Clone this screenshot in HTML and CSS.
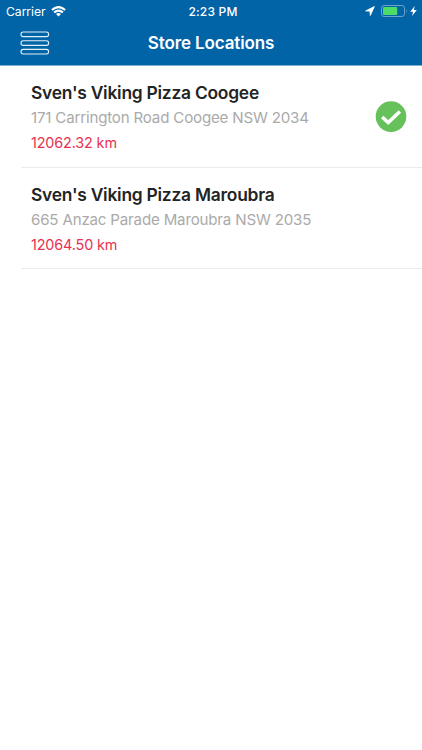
FILE: index.html
```html
<!DOCTYPE html>
<html lang="en">
<head>
<meta charset="utf-8">
<title>Store Locations</title>
<link rel="stylesheet" href="styles.css">
</head>
<body>
<header class="header">
  <div class="status">
    <div class="status-left">
      <span class="carrier">Carrier</span>
      <svg class="wifi" width="15" height="11" viewBox="0 0 15 11" fill="none" stroke="#fff" stroke-width="2.1"><path d="M.9 4.1Q7.5-2 14.1 4.1M3.1 6.6Q7.5 2.5 11.9 6.6"/><path d="M7.5 10.6 5 8Q7.5 6 10 8Z" fill="#fff" stroke="none"/></svg>
    </div>
    <span class="time">2:23 PM</span>
    <div class="status-right">
      <svg width="10" height="10" viewBox="0 0 10 10" fill="#fff" stroke="#fff" stroke-width=".9" stroke-linejoin="round"><path d="M9.3.6.7 4.9 5 5.1 5.3 9.4Z"/></svg>
      <svg class="battery" width="27" height="12" viewBox="0 0 27 12"><rect x=".5" y=".5" width="23" height="11" rx="2.6" fill="none" stroke="#6aa4cd"/><rect x="2" y="2" width="14.2" height="8" rx="1" fill="#4fdc66"/><path d="M25 4Q26.5 6 25 8Z" fill="#6aa4cd"/></svg>
      <svg class="bolt" width="7" height="10" viewBox="0 0 7 10" fill="#fff"><path d="M4.7 0 .2 5.7H3L2.1 10 6.8 4.1H3.9Z"/></svg>
    </div>
  </div>
  <div class="nav">
    <svg class="menu" width="30" height="24" viewBox="0 0 30 24" fill="none" stroke="#e4f0f8" stroke-width="1.1"><rect x="1" y="1" width="27.6" height="4.6" rx="2.2"/><rect x="1" y="9.8" width="27.6" height="4.6" rx="2.2"/><rect x="1" y="18.4" width="27.6" height="4.6" rx="2.2"/></svg>
    <h1 class="title">Store Locations</h1>
  </div>
</header>
<main class="stores">
  <article class="store">
    <div class="info">
      <h2 class="name">Sven's Viking Pizza Coogee</h2>
      <p class="address">171 Carrington Road Coogee NSW 2034</p>
      <p class="distance">12062.32 km</p>
    </div>
    <svg class="check" width="32" height="32" viewBox="0 0 32 32"><circle cx="16" cy="15.6" r="15.3" fill="#67c15b"/><path d="m7.2 16 6 5.6L24.9 10.4" fill="none" stroke="#fff" stroke-width="3.5"/></svg>
  </article>
  <article class="store">
    <div class="info">
      <h2 class="name">Sven's Viking Pizza Maroubra</h2>
      <p class="address">665 Anzac Parade Maroubra NSW 2035</p>
      <p class="distance">12064.50 km</p>
    </div>
  </article>
</main>
</body>
</html>
```
FILE: styles.css
```css
* { box-sizing: border-box; }
body { margin: 0; background: #fff; font-family: Inter, "Liberation Sans", sans-serif; }
h1, h2, p { margin: 0; }
svg { display: block; flex: none; }
.header { height: 66px; background: #0064a7; color: #fff; border-bottom: 1px solid #7db0d2; }
.status { display: grid; grid-template-columns: 1fr auto 1fr; align-items: center; height: 22px; padding: 0 5px 0 6px; }
.status-left, .status-right { display: flex; align-items: center; }
.status-right { justify-content: flex-end; }
.carrier { font-size: 12.2px; font-weight: 400; letter-spacing: -.05px; }
.wifi { margin-left: 5.5px; }
.time { padding-left: 3px; font-size: 12px; font-weight: 500; letter-spacing: .2px; }
.battery { margin-left: 6px; }
.bolt { margin-left: 2px; }
.nav { display: grid; grid-template-columns: 1fr auto 1fr; align-items: center; height: 42px; padding: 0 20px; }
.title { font-size: 17px; line-height: 22px; font-weight: 600; letter-spacing: -.12px; }
.stores { padding-left: 21px; }
.store { display: flex; align-items: center; justify-content: space-between; height: 101.7px; padding: 1px 15px 0 10px; border-bottom: 1px solid #ebebeb; }
.info { padding-top: 2px; white-space: nowrap; }
.name { font-size: 17.4px; line-height: 25px; font-weight: 600; color: #232323; letter-spacing: -.24px; }
.address { font-size: 15.1px; line-height: 25px; color: #aaa; letter-spacing: -.18px; }
.distance { font-size: 14.4px; line-height: 26px; color: #e8304f; letter-spacing: -.14px; }
```
